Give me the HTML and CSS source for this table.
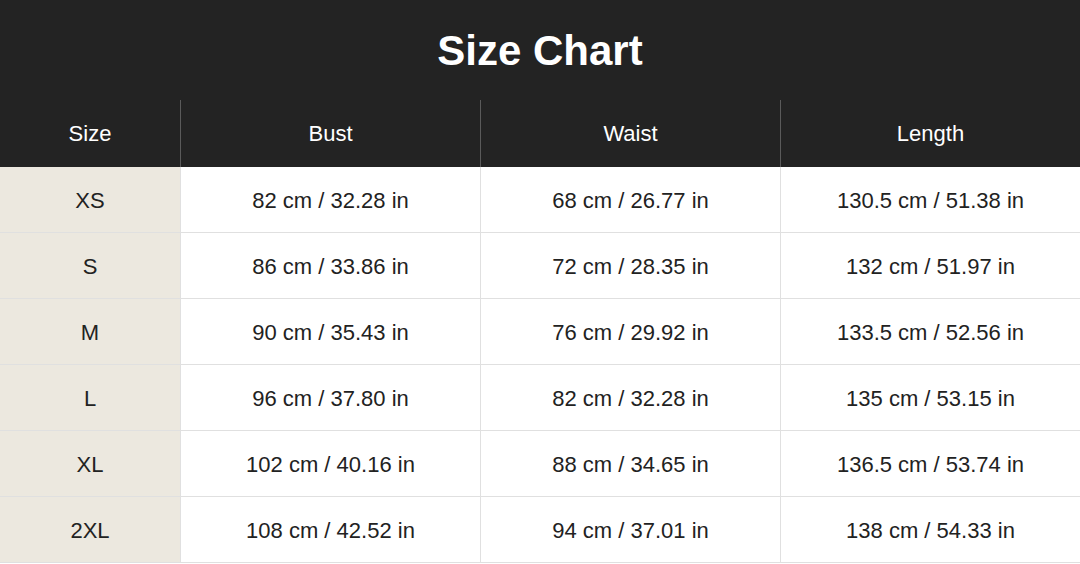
FILE: index.html
```html
<!DOCTYPE html>
<html>
<head>
<meta charset="utf-8">
<link rel="stylesheet" href="styles.css">
</head>
<body>
<div class="chart">
  <div class="title">Size Chart</div>
  <div class="grid">
    <div class="hd first">Size</div><div class="hd">Bust</div><div class="hd">Waist</div><div class="hd last">Length</div>

    <div class="c first">XS</div><div class="c">82 cm / 32.28 in</div><div class="c">68 cm / 26.77 in</div><div class="c last">130.5 cm / 51.38 in</div>
    <div class="c first">S</div><div class="c">86 cm / 33.86 in</div><div class="c">72 cm / 28.35 in</div><div class="c last">132 cm / 51.97 in</div>
    <div class="c first">M</div><div class="c">90 cm / 35.43 in</div><div class="c">76 cm / 29.92 in</div><div class="c last">133.5 cm / 52.56 in</div>
    <div class="c first">L</div><div class="c">96 cm / 37.80 in</div><div class="c">82 cm / 32.28 in</div><div class="c last">135 cm / 53.15 in</div>
    <div class="c first">XL</div><div class="c">102 cm / 40.16 in</div><div class="c">88 cm / 34.65 in</div><div class="c last">136.5 cm / 53.74 in</div>
    <div class="c first">2XL</div><div class="c">108 cm / 42.52 in</div><div class="c">94 cm / 37.01 in</div><div class="c last">138 cm / 54.33 in</div>
  </div>
</div>
</body>
</html>
```

FILE: styles.css
```css
* { box-sizing: border-box; }
html, body { margin: 0; padding: 0; background: #ffffff; }
body { font-family: "Liberation Sans", Arial, sans-serif; color: #222222; }
.chart { width: 1080px; }
.title {
  height: 100px;
  background: #232323;
  color: #ffffff;
  font-size: 42px;
  font-weight: bold;
  display: flex;
  align-items: center;
  justify-content: center;
  padding-top: 2px;
}
.grid {
  display: grid;
  grid-template-columns: 181px 300px 300px 299px;
  grid-template-rows: 67px;
  grid-auto-rows: 66px;
}
.grid > .hd {
  height: 67px;
  background: #232323;
  color: #ffffff;
  font-size: 22px;
  display: flex;
  align-items: center;
  justify-content: center;
  border-right: 1px solid #5a5a5a;
}
.grid > .hd.last { border-right: none; }
.c {
  font-size: 22px;
  display: flex;
  align-items: center;
  justify-content: center;
  padding-top: 2px;
  border-right: 1px solid #e0e0e0;
  border-bottom: 1px solid #e0e0e0;
  background: #ffffff;
}
.c.first { background: #ece8df; }
.c.last { border-right: none; }
```
